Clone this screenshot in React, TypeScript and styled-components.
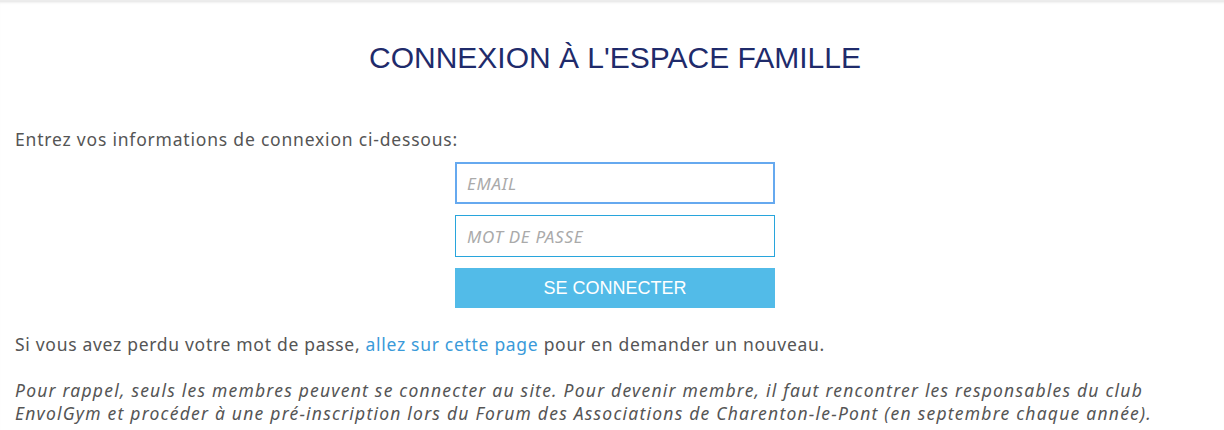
import React from "react";
import styled, { createGlobalStyle } from "styled-components";

const Global = createGlobalStyle`
  html, body { margin: 0; padding: 0; background: #fff; }
  body { font-family: "Noto Sans", "Open Sans", sans-serif; }
`;

const Page = styled.div`
  box-shadow: inset 0 3px 3px -2px rgba(0,0,0,0.12);
  border-top: 1px solid #ececec;
  padding: 0 9px 0 15px;
  width: 1224px;
  box-sizing: border-box;
  height: 430px;
  overflow: hidden;
`;

const Title = styled.h1`
  margin: 0;
  padding-top: 37px;
  text-align: center;
  font-family: "Liberation Sans", Arial, sans-serif;
  font-weight: 400;
  font-size: 30px;
  line-height: 40px;
  color: #1f2b6b;
`;

const Text = styled.p<{ $italic?: boolean }>`
  margin: 0;
  font-family: "Noto Sans", sans-serif;
  font-size: 17.5px;
  line-height: ${(p) => (p.$italic ? "22.5px" : "22px")};
  letter-spacing: ${(p) => (p.$italic ? "1.22px" : "0.8px")};
  color: #555;
  font-style: ${(p) => (p.$italic ? "italic" : "normal")};
`;

const Intro = styled(Text)`
  margin-top: 50px;
`;

const Form = styled.form`
  display: flex;
  flex-direction: column;
  align-items: center;
  gap: 11px;
  margin-top: 12px;
`;

const Input = styled.input<{ $focused?: boolean }>`
  box-sizing: border-box;
  width: 320px;
  height: 42px;
  border: ${(p) => (p.$focused ? "2px solid #66a9ef" : "1px solid #28a5dc")};
  padding: 0 0 0 ${(p) => (p.$focused ? "10px" : "11px")};
  outline: none;
  font-family: "Noto Sans", sans-serif;
  font-style: italic;
  font-size: 17px;
  letter-spacing: 0.7px;
  color: #555;
  background: #fff;
  &::placeholder { color: #aaa; }
`;

const Button = styled.button`
  width: 320px;
  height: 40px;
  border: none;
  background: #52bbe8;
  color: #fff;
  font-family: "Liberation Sans", Arial, sans-serif;
  font-size: 18px;
  cursor: pointer;
`;

const Lost = styled(Text)`
  margin-top: 25px;
  letter-spacing: 0.7px;
`;

const Link = styled.a`
  color: #3a9ad9;
  text-decoration: none;
`;

const Reminder = styled(Text)`
  margin-top: 24px;
`;

export default function App() {
  return (
    <>
      <Global />
      <Page>
        <Title>CONNEXION À L'ESPACE FAMILLE</Title>
        <Intro>Entrez vos informations de connexion ci-dessous:</Intro>
        <Form onSubmit={(e) => e.preventDefault()}>
          <Input $focused placeholder="EMAIL" />
          <Input type="password" placeholder="MOT DE PASSE" />
          <Button type="submit">SE CONNECTER</Button>
        </Form>
        <Lost>
          Si vous avez perdu votre mot de passe, <Link href="#">allez sur cette page</Link> pour en demander un nouveau.
        </Lost>
        <Reminder $italic>
          Pour rappel, seuls les membres peuvent se connecter au site. Pour devenir membre, il faut rencontrer les responsables du club
          <br />
          EnvolGym et procéder à une pré-inscription lors du Forum des Associations de Charenton-le-Pont (en septembre chaque année).
        </Reminder>
      </Page>
    </>
  );
}
